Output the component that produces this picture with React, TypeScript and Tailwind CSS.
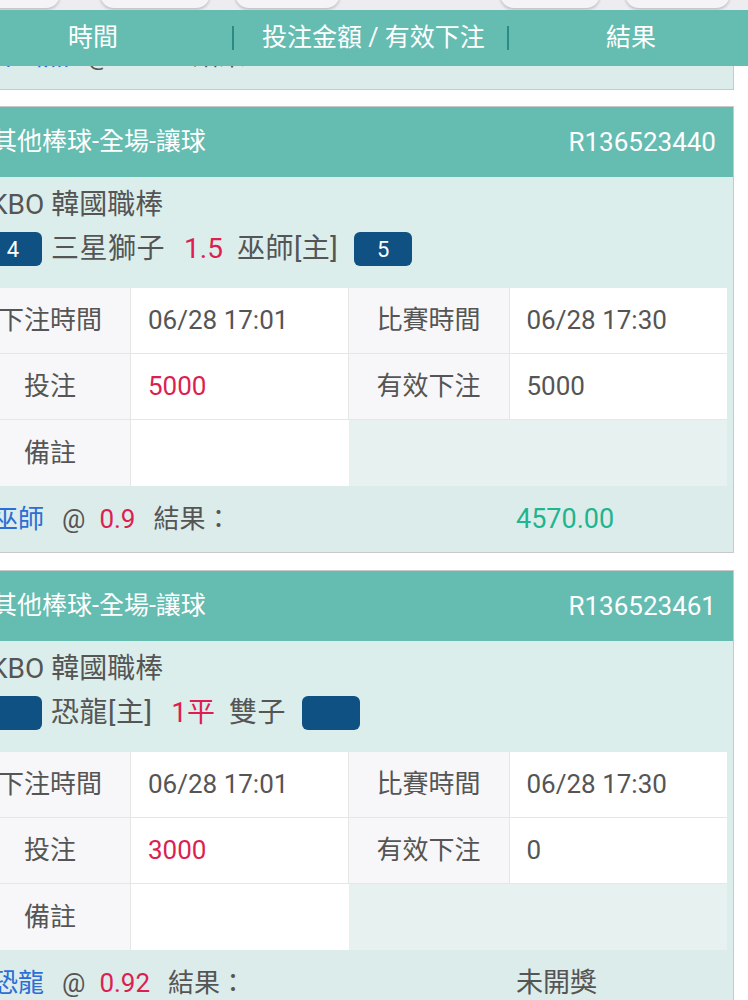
import React from 'react';

interface Bet {
  id: string;
  league: string;
  left: string;
  right: string;
  line: string;
  leftScore: string;
  rightScore: string;
  betTime: string;
  matchTime: string;
  stake: string;
  valid: string;
  pick: string;
  odds: string;
  result: string;
  settled: boolean;
}

const bets: Bet[] = [
  {
    id: 'R136523440',
    league: 'KBO 韓國職棒',
    left: '三星獅子',
    right: '巫師[主]',
    line: '1.5',
    leftScore: '4',
    rightScore: '5',
    betTime: '06/28 17:01',
    matchTime: '06/28 17:30',
    stake: '5000',
    valid: '5000',
    pick: '巫師',
    odds: '0.9',
    result: '4570.00',
    settled: true,
  },
  {
    id: 'R136523461',
    league: 'KBO 韓國職棒',
    left: '恐龍[主]',
    right: '雙子',
    line: '1平',
    leftScore: '',
    rightScore: '',
    betTime: '06/28 17:01',
    matchTime: '06/28 17:30',
    stake: '3000',
    valid: '0',
    pick: '恐龍',
    odds: '0.92',
    result: '未開獎',
    settled: false,
  },
];

const Score = ({ value }: { value: string }) => (
  <span className="flex h-[34px] w-[58px] items-center justify-center rounded-[6px] bg-[#0f5183] text-[22px] text-white">
    {value}
  </span>
);

const Footer = ({ pick, odds, result, settled }: { pick: string; odds: string; result: string; settled: boolean }) => (
  <div className="flex h-[66px] items-center bg-[#dcecea] pl-[28px] text-[26px] text-[#555]">
    <div className="flex w-[524px] items-center">
      <span className="text-[#2c6ed5]">{pick}</span>
      <span className="ml-[18px]">@</span>
      <span className="ml-[14px] text-[#dc1f50]">{odds}</span>
      <span className="ml-[18px]">結果：</span>
    </div>
    <span className={settled ? 'text-[27px] text-[#1fb58f]' : 'text-[27px] text-[#555]'}>{result}</span>
  </div>
);

const BetCard = ({ bet }: { bet: Bet }) => (
  <div className="-ml-[37px] w-[771px] border border-[#c9c9c9] bg-[#dbeeeb]">
    <div className="flex h-[70px] items-center justify-between bg-[#65bcb1] pl-[28px] pr-[17px] text-[25px] text-white">
      <span>其他棒球-全場-讓球</span>
      <span className="text-[26px]">{bet.id}</span>
    </div>

    <div className="pb-[20px] pt-[12px] text-[#555]">
      <div className="h-[32px] pl-[26px] text-[28px] leading-[32px]">{bet.league}</div>
      <div className="mt-[9px] flex h-[38px] items-center pl-[20px] text-[28px]">
        <Score value={bet.leftScore} />
        <span className="ml-[9px] tracking-[0.5px]">{bet.left}</span>
        <span className="ml-[19px] text-[#dc1f50]">{bet.line}</span>
        <span className="ml-[14px] tracking-[0.5px]">{bet.right}</span>
        <span className="ml-[16px]">
          <Score value={bet.rightScore} />
        </span>
      </div>
    </div>

    <div className="mx-[6px] grid grid-cols-[161px_1fr_161px_1fr] text-[26px] text-[#555]">
      <div className="flex h-[66px] items-center justify-center border-b border-r border-[#e6e6e6] bg-[#f7f7f9]">下注時間</div>
      <div className="flex h-[66px] items-center border-b border-r border-[#e6e6e6] bg-white pl-[17px]">{bet.betTime}</div>
      <div className="flex h-[66px] items-center justify-center border-b border-r border-[#e6e6e6] bg-[#f7f7f9]">比賽時間</div>
      <div className="flex h-[66px] items-center border-b border-[#e6e6e6] bg-white pl-[17px]">{bet.matchTime}</div>

      <div className="flex h-[66px] items-center justify-center border-b border-r border-[#e6e6e6] bg-[#f7f7f9]">投注</div>
      <div className="flex h-[66px] items-center border-b border-r border-[#e6e6e6] bg-white pl-[17px] text-[#dc1f50]">{bet.stake}</div>
      <div className="flex h-[66px] items-center justify-center border-b border-r border-[#e6e6e6] bg-[#f7f7f9]">有效下注</div>
      <div className="flex h-[66px] items-center border-b border-[#e6e6e6] bg-white pl-[17px]">{bet.valid}</div>

      <div className="flex h-[66px] items-center justify-center border-r border-[#e6e6e6] bg-[#f7f7f9]">備註</div>
      <div className="h-[66px] bg-white"></div>
      <div className="col-span-2 h-[66px] bg-[#e7f1ef]"></div>
    </div>

    <Footer pick={bet.pick} odds={bet.odds} result={bet.result} settled={bet.settled} />
  </div>
);

export default function App() {
  return (
    <div className="min-h-[1000px] w-[748px] overflow-hidden bg-white font-['Roboto','Noto_Sans_CJK_TC',sans-serif]">
      {/* buttons above, only their bottoms show */}
      <div className="flex h-[10px] overflow-hidden bg-[#ececf1]">
        <div className="-ml-[40px] -mt-[20px] h-[28px] w-[100px] rounded-full bg-[#f4f4f7] shadow-[0_2px_3px_rgba(0,0,0,0.18)]"></div>
        <div className="-mt-[20px] ml-[40px] h-[28px] w-[110px] rounded-full bg-[#f4f4f7] shadow-[0_2px_3px_rgba(0,0,0,0.18)]"></div>
        <div className="-mt-[20px] ml-[25px] h-[28px] w-[105px] rounded-full bg-[#f4f4f7] shadow-[0_2px_3px_rgba(0,0,0,0.18)]"></div>
        <div className="-mt-[20px] ml-[160px] h-[28px] w-[100px] rounded-full bg-[#f4f4f7] shadow-[0_2px_3px_rgba(0,0,0,0.18)]"></div>
        <div className="-mt-[20px] ml-[25px] h-[28px] w-[105px] rounded-full bg-[#f4f4f7] shadow-[0_2px_3px_rgba(0,0,0,0.18)]"></div>
      </div>

      <div className="relative z-10 flex h-[56px] items-center bg-[#65bcb1] text-[25px] text-white">
        <span className="w-[232px] pl-[68px]">時間</span>
        <span className="h-[24px] w-[2px] bg-[#2a8a85]"></span>
        <span className="w-[273px] pl-[28px]">投注金額 / 有效下注</span>
        <span className="h-[24px] w-[2px] bg-[#2a8a85]"></span>
        <span className="pl-[97px]">結果</span>
      </div>

      {/* tail of the previous card, scrolled under the header */}
      <div className="-ml-[37px] -mt-[43px] w-[771px] border-b border-r border-[#c9c9c9]">
        <Footer pick="斗山熊" odds="0.95" result="" settled={true} />
      </div>

      <div className="mt-[16px] flex flex-col gap-[17px]">
        {bets.map((bet) => (
          <BetCard key={bet.id} bet={bet} />
        ))}
      </div>
    </div>
  );
}
